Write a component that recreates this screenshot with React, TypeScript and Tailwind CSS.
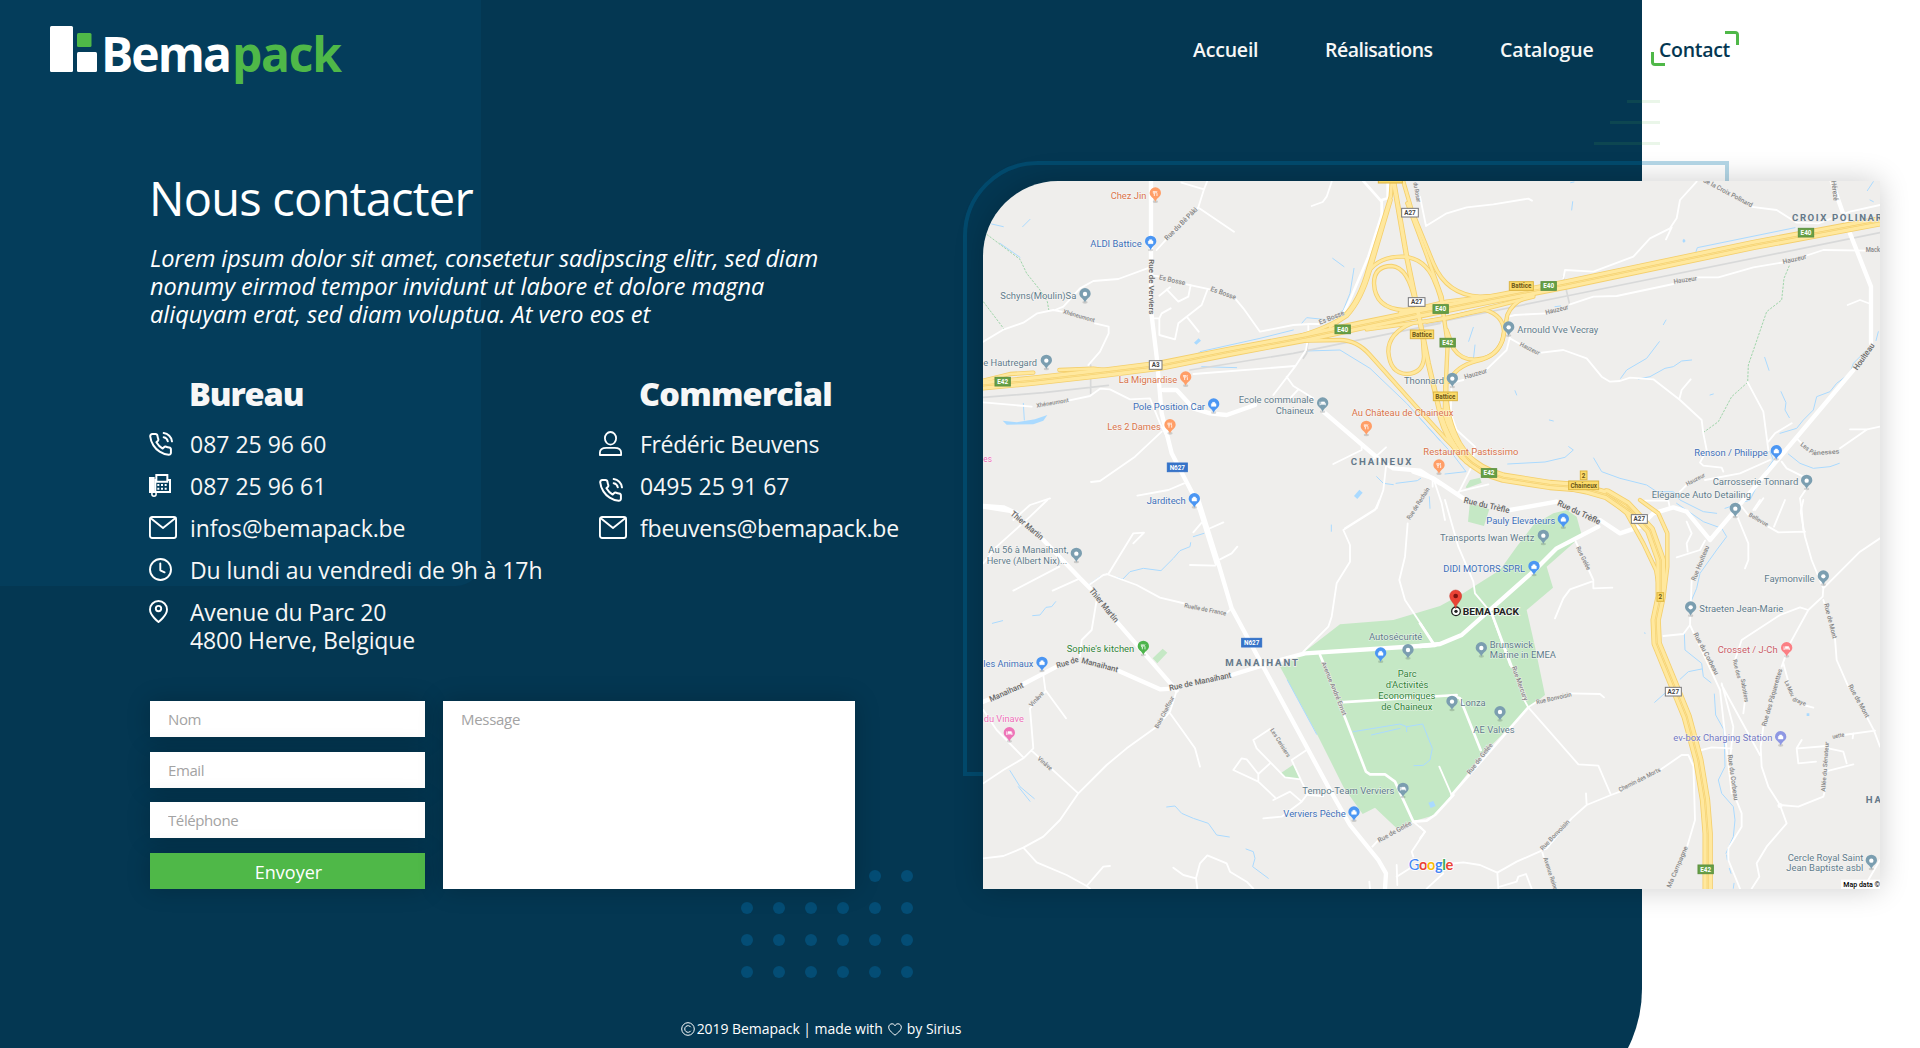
import type { ReactNode } from "react";

/* ---------- map data ---------- */
/* The map is split into tiles, each drawn in thirds of a pixel; E is the motorway junction. */
type Tile = "A" | "B" | "C" | "D" | "E";
const tiles: Record<Tile, string> = {
  A: "translate(960 150) scale(.33333)",
  B: "translate(1420 150) scale(.33333)",
  C: "translate(960 500) scale(.33333)",
  D: "translate(1420 500) scale(.33333)",
  E: "translate(1300 180) scale(.33333)",
};

type Line = [Tile, string];

const parks: Line[] = [
  ["C", "M960 500L1040 450 1140 373 1300 360 1440 318 1510 280 1620 210 1670 140 1720 75 1780 40 1820 30 1850 50 1865 105 1840 130 1760 200 1779 263 1700 330 1725 440 1755 585 1700 630 1560 770 1470 890 1425 945 1355 965 1310 985 1245 923 1208 942 1150 860 1075 710Z"],
  ["C", "M962 820L1003 792 1022 838 975 832Z"],
  ["C", "M578 475L608 446 622 458 592 490Z"],
  ["E", "M497 922L510 900 540 893 545 908 500 925Z"],
  ["D", "M150 5L208 28 192 78 144 65Z"],
];

const water: Line[] = [
  ["A", "M95 222L130 230M188 230L210 208M120 280L180 322M1118 325L1152 350M1182 355L1170 430 1150 480 1110 510 1040 503 1025 520M1000 540L900 565 720 605 705 620M725 650L830 653M1040 603L1140 600 1230 655 1340 760 1440 872M190 760L193 810M1250 980L1270 1000 1300 1004M1308 1000L1372 992 1382 985M1408 1040L1410 1075"],
  ["B", "M452 98L462 96M458 155L455 180M828 305L832 293 1125 233M1342 122L1360 95M1350 150L1360 155M405 470L422 468M160 532L146 574M165 585L160 630M738 510L730 524M718 575L680 625 620 660 602 685M655 687L690 680 735 655 760 650 785 633 815 630M1034 622L1047 661M1375 545L1368 572M1340 600L1300 640 1290 670 1250 700 1230 725 1190 740 1180 780 1150 810 1130 835 1080 850M1083 725L1098 758 1095 780 1108 803M263 942L375 936 435 922 460 900 446 890M75 972L138 965 100 915 0 805M521 924L545 965 600 985 680 1005 710 1025 760 1025 780 1050 850 1085 890 1090M1050 905L1060 930 1020 990 990 1050 915 1075M1105 912L1140 940 1180 955 1230 950 1258 940M285 722L290 735M388 810L400 813M870 735L880 732"],
  ["C", "M385 255L420 230M470 232L488 238 510 215 550 205 603 212 640 175 660 152 690 140 692 128M700 110L732 100M218 347L240 345 258 322 275 320 287 305M97 370L128 362M1114 75L1114 94M982 540L1070 703M150 812L180 860 223 896M175 860L210 904M620 921L645 918 665 940 700 955 745 970 770 1005 808 1011M858 1047L880 1055 885 1075 878 1100 925 1135M1180 695L1320 672 1340 680 1388 672 1417 745 1410 780 1390 796 1362 797M1234 705L1320 685M1340 680L1340 695"],
  ["D", "M770 10L850 65 905 85 920 110 890 150 840 220 830 265 815 300M793 400L795 450 845 490 850 530 873 548M845 507L805 515 780 538M740 575L704 607M883 582L887 645 912 690 915 800 895 840 905 880 940 920 945 960 940 1010 918 1060M920 1065L922 1080M928 1105L933 1120M940 1165L942 1150"],
];

const trails: Line[] = [
  ["A", "M80 253L180 328 200 370 240 420 262 455 267 483M70 455L132 537"],
  ["B", "M1108 347L1092 385 1085 450 1040 485 985 645 983 697 935 740 895 815 852 846"],
];

const rail: Line[] = [
  ["A", "M70 742L250 728 445 706M690 660L1000 610 1440 520M392 645L392 730M1045 565L1040 610 1030 625"],
  ["B", "M0 528L440 438 1380 248M430 380L448 460"],
];

const thinRoads: Line[] = [
  ["A", "M664 98L732 118 742 93M732 118L715 172 640 245 590 300M718 175L822 245M1115 95L1100 140 1088 156 1055 168M570 352L475 387 400 393 360 415 310 470 285 480M70 575L132 538 190 518 232 490 280 480 305 485M405 520L446 530 446 550 420 605 385 645M578 376L600 380M680 403L750 418M825 445L850 475 900 545 1000 525 1050 522 1080 522M742 420L725 465 655 520 645 568 598 555 598 505 578 505M620 418L655 455 685 440 692 405M598 437L630 412M598 505L605 490 632 475M680 500L716 545M700 672L1005 648M1045 522L1045 560 1038 600 1005 650 940 735M980 680L1000 708 1060 745M1015 718L990 745M70 757L215 770M325 752L390 738 420 716 450 718 510 748 570 745 600 820 625 870M605 845L525 920 420 993 393 996M672 1000L625 1020 532 1037M1205 885L1205 900 1120 942M1278 892L1225 940M1278 950L1270 1020 1250 1075 1155 1135M1418 980L1418 1010M270 1045L210 1065 160 1110"],
  ["B", "M0 140L18 228 80 190 140 172 220 163 325 146 336 152M830 95L780 150 770 205 750 235 690 265 640 320 520 365 435 360 430 385M755 232L738 268M990 170L1070 180 1130 218 1195 220 1290 185 1380 165M265 500L285 495 380 490M450 463L520 440 590 438 760 402M830 382L895 382 1000 352 1090 337M1155 318L1210 300 1340 302M270 565L300 582M365 608L430 600 500 625 545 680 570 695 600 693 630 683 700 688 780 750 845 810 850 850 860 900 840 938 850 947 905 953 910 965M778 748L785 720 812 688M983 697L1030 785 1045 900M1045 875L1065 850 1115 820M1283 465L1320 450 1352 462M1290 838L1342 838 1380 830M1342 838L1260 895M1130 865L1145 880M1050 930L960 970 855 990M800 1005L780 1025M1160 1015L1140 1045 1145 1080 1150 1140M270 560L260 600 200 658M130 690L110 695M95 700L92 790 110 840 165 890 155 950 115 1030M115 1025L205 1003M1085 935L1100 955 1160 985M675 1052L745 1052 750 1075M965 1070L985 1095M1030 1045L1005 1080M40 985L65 1060 75 1110"],
  ["C", "M70 190L110 140 210 50 262 0M360 235L278 272M298 200L160 272M410 300L395 390 365 420 360 470M390 253L430 225 445 222 520 100 552 98M520 130L550 100M440 222L530 255 600 293 680 312M795 343L812 328M1258 0L1245 30 1150 90 1170 135 1170 185 1130 250 1115 350 1105 380 1030 455M1343 70L1335 170 1318 240 1335 300 1425 435M700 97L725 68M745 87L790 67M780 178L815 160 832 140M690 195L765 197M250 525L256 570 318 655M256 575L210 625 220 745 190 775 130 810 70 850M70 630L110 690 190 772M215 752L355 880M650 572L630 635 590 680 500 745 440 795 355 880 300 960 250 1010 190 1043 130 1068 70 1075M190 1043L230 1087 320 1125 380 1158 430 1100 450 1098M380 1158L390 1166M630 640L670 695 705 745 720 800M640 1103L670 1125 708 1135 720 1090 742 1066 800 1090 810 1115 860 1145 880 1166M708 1135L712 1166M930 687L880 720 890 745 975 832 1022 838 995 780 1040 750M930 790L895 822 895 845 820 810 845 775 860 778 895 822M895 845L945 892M940 900L990 875 1025 905 1040 885M1020 835L1045 885 1090 888M1025 905L965 950 910 955M1360 965L1395 995 1355 1055 1360 1070M1310 1095L1312 1155M1310 1130L1350 1105M1228 1145L1230 1166M1237 1040L1260 1015"],
  ["D", "M75 0L115 140 160 245 165 280 215 340 270 495M310 595L325 622 350 605M450 580L540 582 552 592M325 622L475 793 535 797 573 885 500 915 455 955 380 1045 290 1085 232 1118 180 1095 130 1087 100 1090M500 915L498 880M232 1118L235 1166M365 1050L375 1085M465 120L520 240 520 265 577 263M515 245L450 268 430 295 405 355M95 885L58 800M573 885L600 875M720 810L785 765 805 765 820 798M845 750L875 742 935 745M800 65L815 100 800 130 803 155M770 172L840 150 855 122M950 45L985 130 985 180 975 205M1045 80L1075 97 1155 95M1020 0L1000 30M1095 0L1062 80M1150 0L1142 35 1155 110 1175 180 1210 265 1208 290 1165 330 1140 322 1080 345 965 420 945 480M1380 115L1320 155 1210 265M1210 300L1215 315M1245 415L1250 480 1285 560M1340 650L1362 692 1380 740M1165 330L1110 430 1085 500M1090 490L1105 545M1150 615L1180 623M975 600L970 640M1030 680L1022 740 1025 800 1045 860 1080 915 1135 920 1210 890 1215 870M1080 915L1100 970 1040 1040 1010 1090 1018 1130 995 1166M945 890L965 940 965 980 925 1045 925 1080 960 1166M935 880L900 570 810 375M905 550L940 680 932 760M905 555L1020 765M810 375L815 240M730 408L790 402 810 375M820 790L825 960 800 1045M1145 720L1130 745 1135 790 1188 785M1135 745L1220 738M1270 705L1365 692M1225 745L1270 755 1280 790M1215 815L1300 793M1300 700L1298 715M1345 1140L1380 1080M0 980L15 995 0 1015M70 1120L20 1166M240 1160L290 1145 295 1130 318 1122 335 1166"],
];

const midRoads: Line[] = [
  ["A", "M70 1072L150 1085 200 1120M1283 93L1283 145 1265 150 1265 195 1225 320 1170 450 1150 490M1210 93L1265 155"],
  ["C", "M1080 465L1095 500M1150 640L1218 815 1230 823 1275 823 1305 845 1360 965 1400 962 1425 945 1480 885M1140 607L1490 585M1487 590L1500 595 1562 750"],
  ["D", "M95 885L325 622M0 370L42 435M215 340L275 500"],
];

const mainRoads: Line[] = [
  ["A", "M573 93L573 480 590 620 605 790 635 910 700 1035 720 1080 770 1240M610 720L650 720 700 775 750 790 800 795 885 765M1090 785L1260 930 1300 955 1380 962 1440 1000"],
  ["B", "M1235 93L1290 250 1353 410 1353 580M1300 660L870 1170M-20 965L40 985 130 1045M270 1080L410 1055M540 1110L600 1150 660 1130 700 1090 760 1072 800 1085 870 1170"],
  ["C", "M70 18L130 22 170 40M250 120L360 235 390 265M470 365L650 572M70 605L95 595M190 552L290 500M475 512L600 568 650 565M815 525L960 480 1035 460 1425 435M715 0L775 190 815 325 1110 870 1170 975 1255 1080 1278 1120 1275 1166"],
  ["D", "M0 438L60 432 125 405 215 325 345 210 410 145 535 80"],
];

const ramps: Line[] = [
  ["E", "M275 10L272 50 205 265Q178 365 130 410 90 440 0 468"],
  ["E", "M272 60L210 270Q185 360 140 408L90 440"],
  ["E", "M205 275Q240 228 310 230 375 235 402 300 425 350 430 400L443 490 437 620Q440 720 480 790 530 870 620 895"],
  ["E", "M310 5L335 90 400 250Q440 345 540 350L640 345 780 320"],
  ["E", "M322 70L380 225 425 350 432 400"],
  ["E", "M345 365Q325 262 275 258 222 258 222 310 225 385 310 390L370 385"],
  ["E", "M335 430Q265 460 265 515 270 580 320 582 370 580 372 530L368 470"],
  ["E", "M20 482L120 480Q170 480 210 525L340 670 440 780 510 850"],
  ["E", "M380 425L555 390Q610 405 612 455 605 520 550 535 490 550 460 505L440 450"],
  ["E", "M700 345Q640 360 622 405L608 480Q590 530 530 543 465 560 448 605"],
  ["E", "M300 398L440 365 560 350 700 340"],
  ["E", "M200 448L440 415 560 385 700 350"],
  ["A", "M70 692L150 672 220 668M298 660L400 656 470 664"],
  ["B", "M560 1040L620 1090 670 1180 708 1260 722 1340"],
  ["D", "M660 0L715 40 742 100 742 200 732 280"],
];

const carriageways: Line[] = [
  ["E", "M281 5L320 230 355 400 385 550 418 690Q440 780 500 845"],
  ["E", "M438 600L436 690Q450 760 490 815"],
];

const motorways: Line[] = [
  ["A", "M60 707L220 692 440 667 600 647 800 607 1040 562 1200 527 1380 490 1580 450 1820 403 2380 285 2770 212"],
  ["E", "M425 700Q448 780 490 825 540 875 610 893L750 915 880 925"],
  ["B", "M450 1008L500 1018 560 1035 640 1090"],
  ["D", "M560 -20L620 15 690 90 722 180 722 290 707 360 710 430 755 540 800 650 835 780 855 900 863 1000 863 1170"],
];

type Label = [Tile, number, number, number, string, string];
/* tile, x, baseline, drawn width, colour class, text */
const or = "fill-[#d9734a]", bl = "fill-[#3d6fb8]", gy = "fill-[#5f7b8a]", gr = "fill-[#2f8236]", pk = "fill-[#ee6fb8]";
const labels: Label[] = [
  ["A", 452, 148, 107, or, "Chez Jin"],
  ["A", 391, 291, 154, bl, "ALDI Battice"],
  ["A", 121, 447, 228, gy, "Schyns(Moulin)Sa"],
  ["A", 70, 647, 161, gy, "e Hautregard"],
  ["A", 476, 698, 176, or, "La Mignardise"],
  ["A", 519, 779, 216, bl, "Pole Position Car"],
  ["A", 442, 839, 160, or, "Les 2 Dames"],
  ["A", 836, 759, 225, gy, "Ecole communale"],
  ["A", 947, 791, 115, gy, "Chaineux"],
  ["A", 1175, 798, 305, or, "Au Château de Chaineux"],
  ["A", 70, 937, 26, pk, "es"],
  ["A", 560, 1063, 117, bl, "Jarditech"],
  ["B", -48, 701, 120, gy, "Thonnard"],
  ["B", 292, 548, 243, gy, "Arnould Vve Vecray"],
  ["B", 10, 914, 285, or, "Restaurant Pastissimo"],
  ["B", 823, 917, 220, bl, "Renson / Philippe"],
  ["B", 878, 1005, 257, gy, "Carrosserie Tonnard"],
  ["B", 695, 1044, 298, gy, "Elégance Auto Detailing"],
  ["C", 85, 160, 240, gy, "Au 56 à Manaihant,"],
  ["C", 80, 192, 242, gy, "Herve (Albert Nix)..."],
  ["C", 320, 456, 203, gr, "Sophie's kitchen"],
  ["C", 70, 501, 150, bl, "les Animaux"],
  ["C", 71, 667, 121, pk, "du Vinave"],
  ["C", 1227, 419, 160, gy, "Autosécurité"],
  ["C", 1313, 531, 57, gr, "Parc"],
  ["C", 1277, 563, 128, gr, "d'Activités"],
  ["C", 1255, 596, 171, gr, "Economiques"],
  ["C", 1264, 629, 153, gr, "de Chaineux"],
  ["C", 1027, 881, 276, gy, "Tempo-Team Verviers"],
  ["C", 970, 952, 187, bl, "Verviers Pêche"],
  ["D", 199, 71, 207, bl, "Pauly Elevateurs"],
  ["D", 60, 123, 283, gy, "Transports Iwan Wertz"],
  ["D", 70, 216, 245, bl, "DIDI MOTORS SPRL"],
  ["D", 209, 443, 130, gy, "Brunswick"],
  ["D", 209, 475, 199, gy, "Marine in EMEA"],
  ["D", 121, 618, 76, gy, "Lonza"],
  ["D", 160, 698, 124, gy, "AE Valves"],
  ["D", 1033, 245, 151, gy, "Faymonville"],
  ["D", 838, 337, 252, gy, "Straeten Jean-Marie"],
  ["D", 893, 460, 180, "fill-[#c95c66]", "Crosset / J-Ch"],
  ["D", 760, 723, 297, "fill-[#7277c2]", "ev-box Charging Station"],
  ["D", 1103, 1082, 227, gy, "Cercle Royal Saint"],
  ["D", 1099, 1114, 231, gy, "Jean Baptiste asbl"],
];

const towns: Label[] = [
  ["A", 1172, 945, 182, "", "CHAINEUX"],
  ["B", 1116, 212, 293, "", "CROIX POLINARD"],
  ["C", 796, 497, 218, "", "MANAIHANT"],
  ["D", 1337, 910, 46, "", "HA"],
];

type Street = [Tile, number, number, number, number, number, string];
/* tile, x, y, angle, width, size, text */
const streets: Street[] = [
  ["A", 566, 328, 90, 165, 22, "Rue de Verviers"],
  ["A", 622, 272, -45, 130, 21, "Rue du Bê Pâki"],
  ["A", 596, 388, 13, 80, 21, "Es Bosse"],
  ["A", 750, 422, 20, 80, 21, "Es Bosse"],
  ["A", 1080, 524, -22, 80, 21, "Es Bosse"],
  ["A", 308, 490, 16, 98, 18, "Xhéneumont"],
  ["A", 230, 773, -10, 98, 18, "Xhéneumont"],
  ["A", 1360, 98, 80, 60, 18, "du Rosar"],
  ["A", 1350, 1110, -57, 110, 19, "Rue de Rechain"],
  ["B", 848, 95, 28, 165, 20, "de la Croix Polinard"],
  ["B", 1234, 93, 83, 60, 21, "Hérezé"],
  ["B", 378, 494, -14, 70, 20, "Hauzeur"],
  ["B", 762, 401, -8, 70, 20, "Hauzeur"],
  ["B", 1090, 342, -13, 72, 20, "Hauzeur"],
  ["B", 298, 587, 26, 64, 19, "Hauzeur"],
  ["B", 135, 688, -17, 70, 20, "Hauzeur"],
  ["B", 1337, 307, 0, 43, 20, "Mack"],
  ["B", 1312, 662, -55, 92, 24, "Houlteau"],
  ["B", 802, 1008, -28, 62, 18, "Hauzeur"],
  ["B", 1140, 886, 38, 50, 19, "Les Pr"],
  ["B", 1180, 916, -4, 78, 19, "énesses"],
  ["B", 130, 1058, 13, 140, 25, "Rue du Trèfle"],
  ["B", 410, 1065, 25, 140, 25, "Rue du Trèfle"],
  ["C", 150, 44, 40, 120, 25, "Thier Martin"],
  ["C", 386, 272, 51, 125, 25, "Thier Martin"],
  ["C", 292, 505, -17, 68, 24, "Rue de"],
  ["C", 363, 488, 15, 113, 24, "Manaihant"],
  ["C", 92, 606, -24, 110, 24, "Manaihant"],
  ["C", 629, 572, -12, 190, 24, "Rue de Manaihant"],
  ["C", 672, 322, 11, 128, 19, "Ruelle de France"],
  ["C", 594, 686, -62, 105, 18, "Bois Chaffour"],
  ["C", 215, 622, -47, 55, 19, "Vinâve"],
  ["C", 231, 778, 41, 52, 19, "Vinâve"],
  ["C", 930, 690, 58, 98, 18, "Les Cerisiers"],
  ["C", 1084, 488, 68, 172, 19, "Avenue André Ernst"],
  ["C", 1258, 1028, -29, 112, 20, "Rue de Gelée"],
  ["D", 150, 824, -52, 112, 20, "Rue de Gelée"],
  ["D", 275, 502, 70, 108, 20, "Rue Mercury"],
  ["D", 350, 613, -13, 108, 19, "Rue Bonvoisin"],
  ["D", 468, 143, 64, 76, 19, "Rue Gelée"],
  ["D", 600, 876, -27, 138, 19, "Chemin des Morts"],
  ["D", 368, 1052, -46, 118, 19, "Rue Bonvoisin"],
  ["D", 370, 1075, 72, 150, 19, "Avenue Reine Astrid"],
  ["D", 745, 1180, -67, 150, 19, "e Ma Campagne"],
  ["D", 826, 244, -68, 112, 20, "Rue Houlteau"],
  ["D", 820, 402, 62, 140, 20, "Rue du Corbeau"],
  ["D", 923, 765, 82, 138, 20, "Rue du Corbeau"],
  ["D", 985, 48, 30, 64, 18, "Bellevue"],
  ["D", 1212, 312, 76, 108, 20, "Rue de Mont"],
  ["D", 1284, 558, 61, 110, 20, "Rue de Mont"],
  ["D", 1038, 680, -74, 178, 20, "Rue des Pâquerettes"],
  ["D", 938, 480, 76, 58, 18, "Rue des"],
  ["D", 962, 538, 80, 70, 18, "Sabotiers"],
  ["D", 1093, 545, 66, 50, 18, "La Mou"],
  ["D", 1116, 602, 22, 42, 18, "draye"],
  ["D", 1216, 875, -86, 150, 18, "Allée du Sénateur"],
  ["D", 1238, 716, -10, 36, 18, "uette"],
];

type Shield = [Tile, number, number, number, string, "white" | "green" | "yellow" | "blue"];
const shields: Shield[] = [
  ["A", 1350, 188, 50, "A27", "white"], ["A", 1370, 456, 50, "A27", "white"], ["A", 587, 645, 38, "A3", "white"],
  ["A", 1148, 538, 46, "E40", "green"], ["A", 128, 695, 46, "E42", "green"], ["A", 652, 952, 60, "N627", "blue"],
  ["A", 1291, 86, 72, "Battice", "yellow"], ["A", 1386, 553, 70, "Battice", "yellow"],
  ["B", 304, 408, 72, "Battice", "yellow"], ["B", 386, 408, 46, "E40", "green"], ["B", 62, 477, 46, "E40", "green"],
  ["B", 83, 578, 46, "E42", "green"], ["B", 76, 739, 72, "Battice", "yellow"], ["B", 1158, 248, 46, "E40", "green"],
  ["B", 207, 969, 46, "E42", "green"], ["B", 491, 976, 20, "2", "yellow"], ["B", 491, 1006, 90, "Chaineux", "yellow"],
  ["C", 875, 428, 60, "N627", "blue"], ["D", 658, 57, 48, "A27", "white"], ["D", 721, 291, 20, "2", "yellow"],
  ["D", 760, 575, 48, "A27", "white"], ["D", 857, 1108, 46, "E42", "green"],
];
const shieldBox = {
  white: "fill-white stroke-[#77777a]",
  green: "fill-[#66a046] stroke-[#5d9140]",
  yellow: "fill-[#fbdb6a] stroke-[#dcb441]",
  blue: "fill-[#3673c8] stroke-[#3673c8]",
};
const shieldText = { white: "fill-[#454545]", green: "fill-white", yellow: "fill-[#6b5618]", blue: "fill-white" };

type Glyph = "dot" | "food" | "bag" | "bed";
type Pin = [Tile, number, number, string, Glyph];
const pO = "fill-[#ff9e67]", pB = "fill-[#4b96f3]", pG = "fill-[#7b9eb0]";
const pins: Pin[] = [
  ["A", 586, 130, pO, "food"], ["A", 572, 275, pB, "bag"], ["A", 375, 432, pG, "dot"], ["A", 259, 632, pG, "dot"],
  ["A", 677, 682, pO, "food"], ["A", 761, 763, pB, "bag"], ["A", 630, 825, pO, "food"], ["A", 1088, 760, pG, "bed"],
  ["A", 1219, 830, pO, "food"], ["A", 703, 1047, pB, "bag"],
  ["B", 57, 946, pO, "food"], ["B", 266, 532, pG, "dot"], ["B", 97, 686, pG, "dot"], ["B", 1069, 903, pB, "bag"],
  ["B", 1160, 992, pG, "dot"], ["B", 946, 1076, pG, "dot"],
  ["C", 349, 161, pG, "dot"], ["C", 550, 440, "fill-[#4db44c]", "food"], ["C", 246, 488, pB, "bag"],
  ["C", 148, 699, "fill-[#ee75b8]", "bed"], ["C", 1262, 460, pB, "bag"], ["C", 1344, 450, pG, "dot"],
  ["C", 1329, 866, pG, "bed"], ["C", 1182, 937, pB, "bag"],
  ["D", 430, 58, pB, "bag"], ["D", 370, 107, pG, "dot"], ["D", 342, 200, pB, "bag"], ["D", 184, 444, pG, "dot"],
  ["D", 96, 605, pG, "dot"], ["D", 240, 636, pG, "dot"], ["D", 1210, 229, pG, "dot"], ["D", 812, 322, pG, "dot"],
  ["D", 1100, 444, "fill-[#fb7f84]", "bed"], ["D", 1082, 711, "fill-[#8e97e3]", "bag"], ["D", 1354, 1082, pG, "dot"],
];
const glyphs: Record<Glyph, ReactNode> = {
  dot: <circle r="6.5" className="fill-white" />,
  food: <path d="M-6 -7v5q0 3 3 3v7M0 -7v5q0 3-3 3M-3-7v6M5-7q-3 3 0 8v7" className="fill-none stroke-white" strokeWidth="2.4" />,
  bag: <path d="M-7-2h14v8h-14zM-3.500-2v-4h7v4" className="fill-white stroke-white" strokeWidth="1.500" />,
  bed: <path d="M-8-5v11M-8 3h16M8-1v7M-4-4h10v5h-10z" className="fill-white stroke-white" strokeWidth="2.200" />,
};

const Lines = ({ data, className, width, dash }: { data: Line[]; className: string; width: number; dash?: string }) => (
  <>
    {data.map(([t, d]) => (
      <path key={t + d} d={d} transform={tiles[t]} className={className} strokeWidth={width} strokeDasharray={dash} strokeLinejoin="round" strokeLinecap={dash ? "butt" : "round"} />
    ))}
  </>
);

function MapView() {
  return (
    <svg viewBox="983 181 897 708" className="block h-full w-full rounded-tl-[75px] bg-[#efeeec] font-['Roboto',sans-serif]">
      {parks.map(([t, d]) => (
        <path key={d} d={d} transform={tiles[t]} className="fill-[#c5e8c5]" />
      ))}
      <Lines data={water} className="fill-none stroke-[#aadaff]" width={3} />
      <g className="fill-[#aadaff]">
        <path transform={tiles.A} d="M128 812L170 817 225 808 262 795 250 812 220 823 140 824ZM702 578L716 565 723 572 709 584ZM1182 1038L1198 1019 1208 1028 1192 1047Z" />
        <path transform={tiles.B} d="M788 270L792 266 797 273 792 278 788 276Z" />
        <path transform={tiles.D} d="M25 908L40 903 47 918 32 924ZM1160 640h8v8h-8ZM672 396L678 400 674 402Z" />
      </g>
      <Lines data={trails} className="fill-none stroke-[#8fcf9c]" width={2.5} dash="7 4" />
      <Lines data={rail} className="fill-none stroke-[#d8d9d9]" width={5} />
      <Lines data={thinRoads} className="fill-none stroke-white" width={5.5} />
      <Lines data={midRoads} className="fill-none stroke-white" width={8} />
      <Lines data={mainRoads} className="fill-none stroke-white" width={13} />
      <circle cx="1780" cy="805.500" r="2.500" className="fill-white" />
      <Lines data={ramps} className="fill-none stroke-[#f4cf6c]" width={13} />
      <Lines data={carriageways} className="fill-none stroke-[#f4cf6c]" width={16} />
      <Lines data={motorways} className="fill-none stroke-[#f4cf6c]" width={31} />
      <Lines data={ramps} className="fill-none stroke-[#ffe89e]" width={8} />
      <Lines data={motorways} className="fill-none stroke-[#ffe89e]" width={26} />
      <Lines data={motorways} className="fill-none stroke-[#f4cf6c]" width={6} />
      <Lines data={motorways} className="fill-none stroke-[#ffe89e]" width={2} />
      <Lines data={carriageways} className="fill-none stroke-[#ffe89e]" width={11} />

      {streets.map(([t, x, y, a, w, s, text]) => (
        <g key={`${t}${x}${y}`} transform={tiles[t]}>
          <text
            transform={`translate(${x} ${y}) rotate(${a})`}
            fontSize={s}
            textLength={w}
            lengthAdjust="spacingAndGlyphs"
            className={s > 21 ? "fill-[#666] stroke-[#efeeec] font-medium [paint-order:stroke]" : "fill-[#858585] stroke-[#efeeec] font-medium [paint-order:stroke]"}
            strokeWidth="3"
          >
            {text}
          </text>
        </g>
      ))}
      {shields.map(([t, x, y, w, text, kind]) => (
        <g key={`${t}${x}${y}`} transform={tiles[t]}>
          <rect x={x - w / 2} y={y - 13} width={w} height="26" strokeWidth="3" className={shieldBox[kind]} />
          <text x={x} y={y + 7} textAnchor="middle" fontSize="19" className={`font-bold ${shieldText[kind]}`}>
            {text}
          </text>
        </g>
      ))}
      {towns.map(([t, x, y, w, , text]) => (
        <g key={text} transform={tiles[t]}>
          <text x={x} y={y} fontSize="29" textLength={w} className="fill-[#64798a] stroke-[#efeeec] font-bold [paint-order:stroke]" strokeWidth="4">
            {text}
          </text>
        </g>
      ))}
      {labels.map(([t, x, y, w, color, text]) => (
        <g key={`${t}${x}${y}`} transform={tiles[t]}>
          <text x={x} y={y} fontSize="28" textLength={w} lengthAdjust="spacingAndGlyphs" className={`stroke-white/60 [paint-order:stroke] ${color}`} strokeWidth="3">
            {text}
          </text>
        </g>
      ))}
      {pins.map(([t, x, y, color, glyph]) => (
        <g key={`${t}${x}${y}`} transform={tiles[t]}>
          <ellipse cx={x} cy={y + 25} rx="8" ry="4" className="fill-black/15" />
          <g transform={`translate(${x} ${y})`}>
            <path d="M0 26C-3 14-17 10-17-1A17 17 0 1 1 17-1C17 10 3 14 0 26Z" className={color} />
            {glyphs[glyph]}
          </g>
        </g>
      ))}

      <g transform={tiles.D}>
        <circle cx="108" cy="334" r="13" className="fill-white stroke-[#222]" strokeWidth="4" />
        <circle cx="108" cy="334" r="5" className="fill-[#222]" />
        <path d="M107 326C104 308 89 303 89 288A18 18 0 1 1 125 288C125 303 110 308 107 326Z" className="fill-[#ea4335] stroke-[#c5352b]" strokeWidth="1.500" />
        <circle cx="107" cy="288" r="7" className="fill-[#7f1310]" />
        <text x="128" y="345" fontSize="29" textLength="169" lengthAdjust="spacingAndGlyphs" className="fill-[#222] stroke-white/80 font-bold [paint-order:stroke]" strokeWidth="4">
          BEMA PACK
        </text>
        <rect x="1263" y="1139" width="120" height="28" className="fill-white/90" />
        <text x="1270" y="1161" fontSize="22" textLength="110" lengthAdjust="spacingAndGlyphs" className="fill-black font-medium">
          Map data ©
        </text>
      </g>
      <g transform={tiles.C}>
        <text x="1346" y="1111" fontSize="44" textLength="134" className="stroke-white font-['Lato',sans-serif] [paint-order:stroke]" strokeWidth="5">
          <tspan className="fill-[#4285f4]">G</tspan>
          <tspan className="fill-[#ea4335] font-bold">o</tspan>
          <tspan className="fill-[#fbbc05] font-bold">o</tspan>
          <tspan className="fill-[#4285f4] font-bold">g</tspan>
          <tspan className="fill-[#34a853] font-bold">l</tspan>
          <tspan className="fill-[#ea4335] font-bold">e</tspan>
        </text>
      </g>
    </svg>
  );
}

/* ---------- contact icons ---------- */
const line = "fill-none stroke-white [stroke-linecap:round] [stroke-linejoin:round]";

const PhoneIcon = ({ className = "" }: { className?: string }) => (
  <svg viewBox="0 0 24 24" className={`block size-[25px] -ml-px ${line} ${className}`} strokeWidth="1.900">
    <path d="M15.05 5A5 5 0 0 1 19 8.950M15.050 1A9 9 0 0 1 23 8.940M22 16.920v3a2 2 0 0 1-2.180 2 19.790 19.790 0 0 1-8.630-3.070 19.500 19.500 0 0 1-6-6 19.790 19.790 0 0 1-3.070-8.670A2 2 0 0 1 4.110 2h3a2 2 0 0 1 2 1.720c.127.960.361 1.903.7 2.810a2 2 0 0 1-.45 2.110L8.090 9.910a16 16 0 0 0 6 6l1.270-1.270a2 2 0 0 1 2.110-.45c.907.339 1.850.573 2.810.7A2 2 0 0 1 22 16.920z" />
  </svg>
);
const FaxIcon = () => (
  <svg viewBox="0 0 66 69" className="block h-[23px] w-[22px] fill-white">
    <path d="M0 9h17v48H0z" />
    <circle cx="15" cy="60" r="6.500" className="fill-none stroke-white" strokeWidth="4.500" />
    <path d="M21 18h-2v36h44V18h-6M22 3h33v20H22z" className="fill-none stroke-white" strokeWidth="6" />
    <path d="M25 30h6v6h-6zM36 30h6v6h-6zM47 30h6v6h-6zM25 41h6v6h-6zM36 41h6v6h-6zM47 41h6v6h-6z" />
  </svg>
);
const MailIcon = () => (
  <svg viewBox="0 0 28 23" className={`block h-[23px] w-7 ${line}`} strokeWidth="1.900">
    <rect x=".95" y=".95" width="26.100" height="21.100" rx="2.200" />
    <path d="M1.500 2l12.500 10L26.500 2" />
  </svg>
);
const ClockIcon = () => (
  <svg viewBox="0 0 23 23" className={`block size-[23px] ${line}`} strokeWidth="1.900">
    <circle cx="11.500" cy="11.500" r="10.500" />
    <path d="M11.300 5.500v6.800l4.300 2" />
  </svg>
);
const PinIcon = () => (
  <svg viewBox="0 0 19 23" className={`block h-[23px] w-[19px] ${line}`} strokeWidth="1.900">
    <path d="M18 9.500c0 6-8.500 12.500-8.500 12.500S1 15.500 1 9.500a8.500 8.500 0 0 1 17 0z" />
    <circle cx="9.500" cy="8.600" r="2.700" />
  </svg>
);
const PersonIcon = () => (
  <svg viewBox="0 0 23 25" className={`block h-[25px] w-[23px] ${line}`} strokeWidth="1.800">
    <ellipse cx="11.500" cy="7.300" rx="5.600" ry="6.300" />
    <path d="M.9 24v-2.500c0-3.600 3.500-4.700 6.500-4.700h8.200c3 0 6.500 1.100 6.500 4.700V24z" />
  </svg>
);

function Row({ icon, children, iconClass = "pt-0.5" }: { icon: ReactNode; children: ReactNode; iconClass?: string }) {
  return (
    <li className="flex">
      <span className={`w-[41px] shrink-0 ${iconClass}`}>{icon}</span>
      <span>{children}</span>
    </li>
  );
}

const field = "block h-9 w-[275px] bg-white px-[18px] text-[15px] tracking-[-0.4px] text-[#333] shadow-[0_0_24px_rgba(0,0,0,0.2)] outline-none placeholder:text-[#a3a3a3]";

export default function App() {
  return (
    <div className="relative h-[1048px] w-full overflow-hidden bg-white font-['Open_Sans',sans-serif] text-[#f7f7f7]">
      <div className="absolute left-0 top-0 h-[1120px] w-[1642px] rounded-br-[131px] bg-[#043752]" />
      <div className="absolute left-0 top-0 h-[586px] w-[481px] rounded-br-[25px] bg-[#043d5b]" />
      <div className="absolute left-[1594px] top-[100px] flex w-[66px] flex-col items-end gap-[18px]">
        <span className="h-[3px] w-[33px] bg-[#4fb848]/12" />
        <span className="h-[3px] w-[50px] bg-[#4fb848]/12" />
        <span className="h-[3px] w-[66px] bg-[#4fb848]/12" />
      </div>
      <div className="absolute left-[741px] top-[870px] grid grid-cols-6 gap-5">
        {Array.from({ length: 24 }, (_, i) => (
          <span key={i} className="size-3 rounded-full bg-[#044d75]" />
        ))}
      </div>

      <div className="relative flex h-full flex-col">
        <header className="flex h-[98px] shrink-0">
          <a className="flex w-[1143px] pl-[50px] pt-[26px]">
            <svg viewBox="0 0 47 46" className="h-[46px] w-[47px] shrink-0">
              <rect width="23" height="46" rx="1.500" className="fill-white" />
              <rect x="27" y="7" width="14.500" height="14" rx="1.500" className="fill-[#4fb848]" />
              <rect x="27" y="26" width="20" height="20" rx="1.500" className="fill-white" />
            </svg>
            <span className="-mt-[4px] ml-[4px] flex text-[48px] font-bold leading-[64px]">
              <span className="w-[131px] tracking-[-1.9px] text-white">Bema</span>
              <span className="tracking-[-1.300px] text-[#4fb848]">pack</span>
            </span>
          </a>
          <nav className="ml-[50px] mt-[36px] flex gap-[67px] text-[19.5px] font-semibold leading-7">
            <a className="w-[65px] tracking-[-0.2px]">Accueil</a>
            <a className="w-[108px] tracking-[-0.5px]">Réalisations</a>
            <a className="w-[92px] tracking-[-0.1px]">Catalogue</a>
            <a className="relative w-[71px] tracking-[-0.3px] text-[#043752]">
              Contact
              <span className="absolute -top-[5px] left-[65.500px] h-[14px] w-[14px] rounded-tr-sm border-r-[3px] border-t-[3px] border-[#4fb848]" />
              <span className="absolute left-[-8px] top-[16px] h-[14px] w-[14px] rounded-bl-sm border-b-[3px] border-l-[3px] border-[#4fb848]" />
            </a>
          </nav>
        </header>

        <main className="flex">
          <section className="w-[983px] pl-[150px] pt-[68px]">
            <h1 className="-ml-px text-[47px] leading-[64px] tracking-[-0.75px] text-white">Nous contacter</h1>
            <p className="mt-[14px] w-[700px] whitespace-nowrap text-[23.5px] italic leading-7 text-white">
              <span className="tracking-[-0.12px]">Lorem ipsum dolor sit amet, consetetur sadipscing elitr, sed diam</span>
              <br />
              <span className="tracking-[-0.04px]">nonumy eirmod tempor invidunt ut labore et dolore magna</span>
              <br />
              aliquyam erat, sed diam voluptua. At vero eos et
            </p>

            <div className="-ml-px mt-[46px] grid grid-cols-[450px_360px] whitespace-nowrap">
              <div>
                <h2 className="pl-[40px] text-[32.500px] font-extrabold leading-10 tracking-[-1.1px]">Bureau</h2>
                <ul className="mt-[16px] flex flex-col gap-[14px] text-[23px] leading-7 tracking-[-0.1px]">
                  <Row icon={<PhoneIcon />}><span className="tracking-normal">087 25 96 60</span></Row>
                  <Row icon={<FaxIcon />}><span className="tracking-normal">087 25 96 61</span></Row>
                  <Row icon={<MailIcon />}>infos@bemapack.be</Row>
                  <Row icon={<ClockIcon />}>Du lundi au vendredi de 9h à 17h</Row>
                  <Row icon={<PinIcon />}>
                    <span className="tracking-[-0.2px]">Avenue du Parc 20</span>
                    <br />
                    4800 Herve, Belgique
                  </Row>
                </ul>
              </div>
              <div>
                <h2 className="pl-[40px] text-[32.500px] font-extrabold leading-10 tracking-[-0.8px]">Commercial</h2>
                <ul className="mt-[16px] flex flex-col gap-[14px] text-[23px] leading-7 tracking-[-0.2px]">
                  <Row icon={<PersonIcon />} iconClass="pt-px"><span className="tracking-[-0.35px]">Frédéric Beuvens</span></Row>
                  <Row icon={<PhoneIcon className="-mb-2" />} iconClass="pt-1.5"><span className="tracking-normal">0495 25 91 67</span></Row>
                  <Row icon={<MailIcon />}>fbeuvens@bemapack.be</Row>
                </ul>
              </div>
            </div>

            <form className="mt-[47px] flex h-[188px] gap-[18px]">
              <div className="flex flex-col justify-between">
                <input className={field} placeholder="Nom" />
                <input className={field} placeholder="Email" />
                <input className={field} placeholder="Téléphone" />
                <button type="button" className="flex h-9 items-center justify-center bg-[#4fb848] pl-0.5 pt-0.5 text-[18px] leading-6 text-white shadow-[0_0_24px_rgba(0,0,0,0.2)]">
                  Envoyer
                </button>
              </div>
              <textarea
                className="h-[188px] w-[412px] resize-none bg-white px-[18px] py-[7px] text-[15px] leading-[22px] tracking-[-0.3px] text-[#333] shadow-[0_0_24px_rgba(0,0,0,0.2)] outline-none placeholder:text-[#a3a3a3]"
                placeholder="Message"
              />
            </form>
          </section>

          <section className="relative mt-[83px] h-[708px] w-[897px] shrink-0">
            <div className="absolute -left-5 -top-5 h-[615px] w-[766px] rounded-tl-[75px] border-4 border-[#0079b0]/29" />
            <div className="relative h-full overflow-visible rounded-tl-[75px] shadow-[0_0_30px_rgba(0,0,0,0.2)]">
              <MapView />
            </div>
          </section>
        </main>

        <footer className="mb-[9px] mt-auto flex w-[1642px] items-center justify-center text-[14px] leading-5 tracking-[-0.05px] text-white">
          <svg viewBox="0 0 14 14" className="mr-0.5 size-[14px] fill-none stroke-white" strokeWidth="1">
            <circle cx="7" cy="7" r="6.300" />
            <path d="M9.800 5.200a3.300 3.300 0 1 0 0 3.600" />
          </svg>
          2019 Bemapack | made with
          <svg viewBox="0 0 14 13" className="mx-[5px] h-[13px] w-[14px] fill-none stroke-white" strokeWidth="1">
            <path d="M7 12.200C3 9 .7 6.800.7 4.200.7 2.300 2.200.8 4 .8c1.300 0 2.400.7 3 1.900C7.600 1.500 8.700.8 10 .8c1.800 0 3.300 1.500 3.300 3.400 0 2.600-2.300 4.800-6.300 8z" />
          </svg>
          by Sirius
        </footer>
      </div>
    </div>
  );
}
